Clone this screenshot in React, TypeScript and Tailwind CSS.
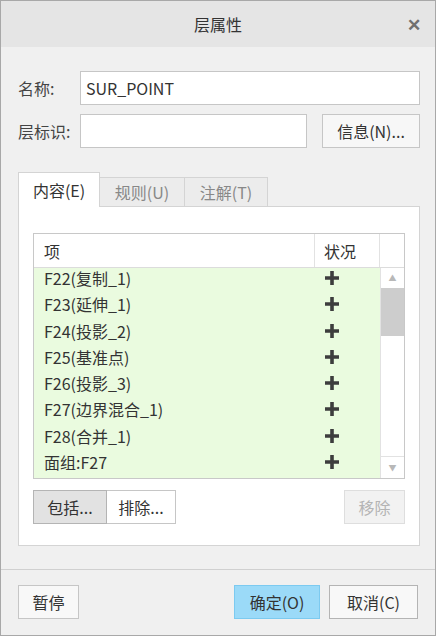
import React from 'react';

const rows = ['F22(复制_1)', 'F23(延伸_1)', 'F24(投影_2)', 'F25(基准点)', 'F26(投影_3)', 'F27(边界混合_1)', 'F28(合并_1)', '面组:F27'];

function Plus() {
  return (
    <svg width="16" height="16" viewBox="0 0 16 16">
      <path d="M6.2 1h3.6v5.2H15v3.6H9.8V15H6.2V9.8H1V6.2h5.2z" fill="#3d3d3d" />
    </svg>
  );
}

export default function App() {
  return (
    <div
      className="w-[436px] h-[636px] bg-[#f0f0f0] border border-[#a8a8a8] flex flex-col text-[#3a3a3a]"
      style={{ fontFamily: '"Noto Sans CJK SC", "Noto Sans", sans-serif' }}
    >
      {/* title bar */}
      <div className="h-[46px] bg-[#e5e5e5] flex items-center justify-center relative shrink-0">
        <span className="text-[16px] text-[#333]">层属性</span>
        <span className="absolute right-[14px] top-[10px] text-[17px] font-bold text-[#707070]">✕</span>
      </div>

      <div className="pl-[17px] pr-[15px] pt-[24px] flex flex-col">
        <div className="flex items-center h-[34px]">
          <span className="w-[62px] text-[16px] text-[#444]">名称:</span>
          <div className="flex-1 h-[34px] bg-white border border-[#c6c6c6] flex items-center pl-[5px] text-[16px] text-[#333]">SUR_POINT</div>
        </div>
        <div className="flex items-center h-[34px] mt-[9px]">
          <span className="w-[62px] text-[16px] text-[#444]">层标识:</span>
          <div className="w-[227px] h-[34px] bg-white border border-[#c6c6c6]" />
          <button className="ml-auto w-[98px] h-[34px] bg-[#f7f7f7] border border-[#c6c6c6] text-[16px] text-[#333]">信息(N)...</button>
        </div>

        {/* tabs */}
        <div className="flex items-end mt-[24px] h-[34px]">
          <div className="w-[82px] h-[35px] bg-white border border-[#d4d4d4] border-b-0 flex items-center justify-center text-[16px] text-[#333] relative z-10 -mb-px pb-px">内容(E)</div>
          <div className="w-[85px] h-[29px] bg-[#ececec] border border-[#d4d4d4] border-l-0 border-b-0 flex items-center justify-center text-[16px] text-[#888]">规则(U)</div>
          <div className="w-[83px] h-[29px] bg-[#ececec] border border-[#d4d4d4] border-l-0 border-b-0 flex items-center justify-center text-[16px] text-[#888]">注解(T)</div>
        </div>
        <div className="w-[402px] h-[340px] bg-white border border-[#d4d4d4] px-[14px] pt-[26px] flex flex-col">
          {/* table */}
          <div className="w-[372px] h-[246px] border border-[#c8c8c8] flex flex-col">
            <div className="flex h-[34px] border-b border-[#dcdcdc] shrink-0">
              <div className="w-[281px] pl-[10px] flex items-center text-[16px] text-[#333] border-r border-[#e2e2e2]">项</div>
              <div className="w-[65px] pl-[9px] flex items-center text-[16px] text-[#333] border-r border-[#e2e2e2]">状况</div>
              <div className="flex-1" />
            </div>
            <div className="flex flex-1">
              <div className="w-[346px] bg-[#eafbdf] flex flex-col">
                {rows.map((r) => (
                  <div key={r} className="flex h-[26.25px] items-center pb-[6px]">
                    <div className="w-[281px] pl-[10px] text-[16px] text-[#333] leading-none">{r}</div>
                    <div className="flex-1 flex pl-[9px]"><Plus /></div>
                  </div>
                ))}
              </div>
              <div className="flex-1 flex flex-col border-l border-[#e2e2e2] bg-white">
                <div className="h-[20px] flex items-center justify-center text-[8px] text-[#b8b8b8]">▲</div>
                <div className="h-[48px] bg-[#cdcdcd]" />
                <div className="flex-1" />
                <div className="h-[22px] flex items-center justify-center text-[8px] text-[#b8b8b8] border-t border-[#e2e2e2]">▼</div>
              </div>
            </div>
          </div>

          <div className="flex mt-[11px] h-[34px]">
            <button className="w-[74px] h-[34px] bg-[#e2e2e2] border border-[#b4b4b4] text-[16px] text-[#333]">包括...</button>
            <button className="w-[69px] h-[34px] bg-white border border-[#c6c6c6] border-l-0 text-[16px] text-[#333]">排除...</button>
            <button className="ml-auto w-[61px] h-[34px] bg-[#f2f2f2] border border-[#dedede] text-[16px] text-[#b4b4b4]">移除</button>
          </div>
        </div>
      </div>

      <div className="mt-[23px] border-t border-[#d0d0d0] px-[17px] pt-[15px] flex">
        <button className="w-[61px] h-[34px] bg-[#f8f8f8] border border-[#c6c6c6] text-[16px] text-[#333]">暂停</button>
        <button className="ml-auto w-[86px] h-[34px] bg-[#9bdaf8] border border-[#7ccaf0] text-[16px] text-[#333]">确定(O)</button>
        <button className="ml-[9px] w-[89px] h-[34px] bg-[#f8f8f8] border border-[#b4b4b4] text-[16px] text-[#333]">取消(C)</button>
      </div>
    </div>
  );
}
